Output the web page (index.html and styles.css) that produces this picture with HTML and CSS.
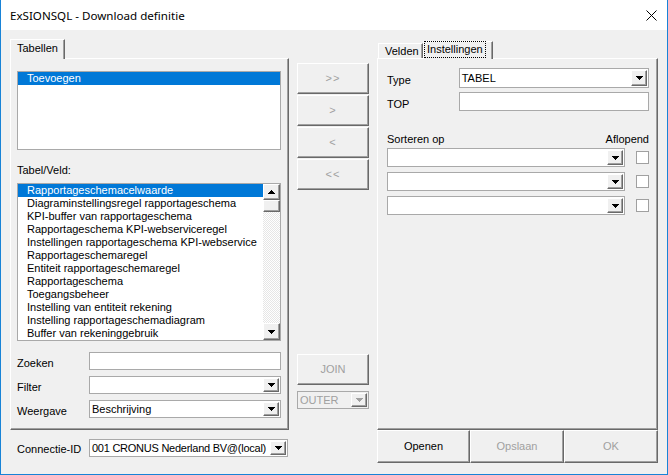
FILE: index.html
```html
<!DOCTYPE html>
<html lang="nl">

<head>
    <meta charset="UTF-8">
    <title>ExSIONSQL - Download definitie</title>
    <link rel="stylesheet" href="styles.css">
</head>

<body>
    <div class="window">
        <div class="titlebar">
            <span class="title">ExSIONSQL - Download definitie</span>
            <svg class="close" width="11" height="11" viewBox="0 0 11 11">
                <path d="M0.5 0.5L10.5 10.5M10.5 0.5L0.5 10.5" stroke="#000" stroke-width="1" fill="none" />
            </svg>
        </div>

        <div class="client">
            <!-- linker kolom: tabellen -->
            <div class="col-left">
                <div class="tabstrip">
                    <div class="tab tab-sel tab-tabellen">Tabellen</div>
                </div>
                <div class="pane pane-left">
                    <div class="listbox lb-tables">
                        <div class="item sel">Toevoegen</div>
                    </div>
                    <div class="lbl-tv">Tabel/Veld:</div>
                    <div class="listbox lb-fields">
                        <div class="items">
                            <div class="item sel">Rapportageschemacelwaarde</div>
                            <div class="item">Diagraminstellingsregel rapportageschema</div>
                            <div class="item">KPI-buffer van rapportageschema</div>
                            <div class="item">Rapportageschema KPI-webserviceregel</div>
                            <div class="item">Instellingen rapportageschema KPI-webservice</div>
                            <div class="item">Rapportageschemaregel</div>
                            <div class="item">Entiteit rapportageschemaregel</div>
                            <div class="item">Rapportageschema</div>
                            <div class="item">Toegangsbeheer</div>
                            <div class="item">Instelling van entiteit rekening</div>
                            <div class="item">Instelling rapportageschemadiagram</div>
                            <div class="item">Buffer van rekeninggebruik</div>
                        </div>
                        <div class="vscroll">
                            <div class="sbtn"><svg width="7" height="4" viewBox="0 0 7 4"><path d="M3 0h1v1H3zM2 1h3v1H2zM1 2h5v1H1zM0 3h7v1H0z" /></svg></div>
                            <div class="thumb"></div>
                            <div class="track"></div>
                            <div class="sbtn sbtn-down"><svg width="7" height="4" viewBox="0 0 7 4"><path d="M0 0h7v1H0zM1 1h5v1H1zM2 2h3v1H2zM3 3h1v1H3z" /></svg></div>
                        </div>
                    </div>

                    <div class="frow frow-first">
                        <label>Zoeken</label>
                        <div class="textbox field"></div>
                    </div>
                    <div class="frow">
                        <label>Filter</label>
                        <div class="combo field">
                            <div class="val"></div>
                            <div class="drop"><svg width="7" height="4" viewBox="0 0 7 4"><path d="M0 0h7v1H0zM1 1h5v1H1zM2 2h3v1H2zM3 3h1v1H3z" /></svg></div>
                        </div>
                    </div>
                    <div class="frow">
                        <label>Weergave</label>
                        <div class="combo field">
                            <div class="val">Beschrijving</div>
                            <div class="drop"><svg width="7" height="4" viewBox="0 0 7 4"><path d="M0 0h7v1H0zM1 1h5v1H1zM2 2h3v1H2zM3 3h1v1H3z" /></svg></div>
                        </div>
                    </div>
                </div>

                <div class="frow frow-conn">
                    <label>Connectie-ID</label>
                    <div class="combo conn">
                        <div class="val">001 CRONUS Nederland BV@(local)</div>
                        <div class="drop"><svg width="7" height="4" viewBox="0 0 7 4"><path d="M0 0h7v1H0zM1 1h5v1H1zM2 2h3v1H2zM3 3h1v1H3z" /></svg></div>
                    </div>
                </div>
            </div>

            <!-- midden: knoppen -->
            <div class="col-mid">
                <div class="btn3d mbtn dis">&gt;&gt;</div>
                <div class="btn3d mbtn dis">&gt;</div>
                <div class="btn3d mbtn dis">&lt;</div>
                <div class="btn3d mbtn dis">&lt;&lt;</div>
                <div class="btn3d jbtn dis">JOIN</div>
                <div class="combo outer dis">
                    <div class="val">OUTER</div>
                    <div class="drop"><svg width="7" height="4" viewBox="0 0 7 4"><path d="M0 0h7v1H0zM1 1h5v1H1zM2 2h3v1H2zM3 3h1v1H3z" /></svg></div>
                </div>
            </div>

            <!-- rechter kolom: velden / instellingen -->
            <div class="col-right">
                <div class="tabstrip tabstrip-right">
                    <div class="tab tab-velden">Velden</div>
                    <div class="tab tab-sel tab-inst"><span class="focus">Instellingen</span></div>
                </div>
                <div class="pane pane-right">
                    <div class="rrow">
                        <label>Type</label>
                        <div class="combo rfield type">
                            <div class="val">TABEL</div>
                            <div class="drop"><svg width="7" height="4" viewBox="0 0 7 4"><path d="M0 0h7v1H0zM1 1h5v1H1zM2 2h3v1H2zM3 3h1v1H3z" /></svg></div>
                        </div>
                    </div>
                    <div class="rrow rrow-top">
                        <label>TOP</label>
                        <div class="textbox rfield top"></div>
                    </div>

                    <div class="sorthead">
                        <span>Sorteren op</span>
                        <span>Aflopend</span>
                    </div>
                    <div class="sortrow">
                        <div class="combo sortcombo">
                            <div class="val"></div>
                            <div class="drop"><svg width="7" height="4" viewBox="0 0 7 4"><path d="M0 0h7v1H0zM1 1h5v1H1zM2 2h3v1H2zM3 3h1v1H3z" /></svg></div>
                        </div>
                        <div class="check"></div>
                    </div>
                    <div class="sortrow">
                        <div class="combo sortcombo">
                            <div class="val"></div>
                            <div class="drop"><svg width="7" height="4" viewBox="0 0 7 4"><path d="M0 0h7v1H0zM1 1h5v1H1zM2 2h3v1H2zM3 3h1v1H3z" /></svg></div>
                        </div>
                        <div class="check"></div>
                    </div>
                    <div class="sortrow">
                        <div class="combo sortcombo">
                            <div class="val"></div>
                            <div class="drop"><svg width="7" height="4" viewBox="0 0 7 4"><path d="M0 0h7v1H0zM1 1h5v1H1zM2 2h3v1H2zM3 3h1v1H3z" /></svg></div>
                        </div>
                        <div class="check"></div>
                    </div>
                </div>
                <div class="bbar">
                    <div class="btn3d bbtn b1">Openen</div>
                    <div class="btn3d bbtn dis">Opslaan</div>
                    <div class="btn3d bbtn dis">OK</div>
                </div>
            </div>
        </div>
    </div>
</body>

</html>
```

FILE: styles.css
```css
* {
    box-sizing: border-box;
}

body {
    margin: 0;
    font-family: "Liberation Sans", Arial, sans-serif;
    font-size: 11px;
    line-height: 13px;
    color: #000;
}

.window {
    width: 668px;
    height: 475px;
    border: 1px solid #1883d7;
    border-top: none;
    background: #f0f0f0;
}

.titlebar {
    height: 30px;
    background: #fff;
    display: flex;
    align-items: center;
    justify-content: space-between;
    padding: 0 10px 0 9px;
}

.title {
    font-family: "Noto Sans", sans-serif;
    font-size: 11.6px;
    padding-top: 1px;
}

.client {
    display: flex;
    gap: 8px;
    padding: 8px 0 0 9px;
}

/* 3d randen */
.btn3d,
.drop,
.sbtn,
.thumb {
    background: #f0f0f0;
    border: 1px solid;
    border-color: #fff #696969 #696969 #fff;
    box-shadow: inset -1px -1px #a0a0a0;
}

.dis {
    color: #a0a0a0;
}

/* tabs */
.tabstrip {
    height: 20px;
    display: flex;
    align-items: flex-end;
    position: relative;
    z-index: 1;
}

.tab {
    background: #f0f0f0;
    border: 1px solid;
    border-color: #fff #696969 transparent #fff;
    border-bottom: none;
    box-shadow: inset -1px 0 #a0a0a0;
    white-space: nowrap;
}

.tab-sel {
    margin-bottom: -1px;
}

.tab-tabellen {
    height: 20px;
    width: 55px;
    padding: 2px 0 0 6px;
}

.tab-velden {
    margin-left: 1px;
    width: 45px;
    height: 15px;
    padding: 1px 0 0 6px;
}

.tab-inst {
    width: 70px;
    height: 18px;
    padding: 0 0 0 1px;
}

.focus {
    display: inline-block;
    outline: 1px dotted #000;
    outline-offset: 0;
    padding: 1px 2px 1px 2px;
    line-height: 13px;
}

.pane {
    height: 372px;
    border: 1px solid;
    border-color: #fff #696969 #696969 #fff;
    box-shadow: inset -1px -1px #a0a0a0;
}

/* linker kolom */
.col-left {
    width: 279px;
    display: flex;
    flex-direction: column;
}

.pane-left {
    padding: 12px 0 0 6px;
}

.listbox {
    width: 264px;
    background: #fff;
    border: 1px solid #a9a9a9;
}

.lb-tables {
    height: 79px;
}

.item {
    height: 13px;
    padding-left: 9px;
    white-space: nowrap;
}

.item.sel {
    background: #0078d7;
    color: #fff;
}

.lbl-tv {
    margin: 14px 0 6px;
}

.lb-fields {
    height: 158px;
    display: flex;
}

.lb-fields .items {
    flex: 1;
    overflow: hidden;
}

.vscroll {
    width: 17px;
    display: flex;
    flex-direction: column;
}

.sbtn {
    height: 16px;
    display: flex;
    align-items: center;
    justify-content: center;
}

.sbtn-down {
    height: 17px;
}

.thumb {
    height: 12px;
}

.track {
    flex: 1;
    background: repeating-conic-gradient(#e6e6e6 0 25%, #fff 0 50%) 0 0 / 2px 2px;
}

.frow {
    display: flex;
    margin-top: 6px;
}

.frow label {
    width: 72px;
    padding-top: 5px;
}

.frow-first {
    margin-top: 11px;
}

.field {
    width: 192px;
    height: 18px;
}

.textbox {
    background: #fff;
    border: 1px solid #a9a9a9;
}

.combo {
    display: flex;
    background: #fff;
    border: 1px solid #a9a9a9;
    padding: 1px;
}

.combo .val {
    flex: 1;
    padding: 1px 0 0 1px;
    white-space: nowrap;
    overflow: hidden;
}

.drop {
    width: 16px;
    flex: none;
    display: flex;
    align-items: center;
    justify-content: center;
}

.frow-conn {
    margin-top: 9px;
    padding-left: 7px;
}

.frow-conn label {
    padding-top: 4px;
}

.conn {
    width: 199px;
    height: 18px;
}

.conn .val {
    letter-spacing: -0.25px;
}

/* midden */
.col-mid {
    width: 72px;
    display: flex;
    flex-direction: column;
    padding-top: 25px;
}

.mbtn {
    height: 31px;
    margin-bottom: 1px;
    display: flex;
    align-items: center;
    justify-content: center;
    letter-spacing: 1px;
}

.jbtn {
    height: 31px;
    margin-top: 163px;
    display: flex;
    align-items: center;
    justify-content: center;
}

.outer {
    margin-top: 6px;
    height: 18px;
    background: #f0f0f0;
}

.outer .drop svg {
    fill: #a0a0a0;
}

/* rechter kolom */
.col-right {
    width: 281px;
    display: flex;
    flex-direction: column;
}

.pane-right {
    padding: 9px 8px 0 9px;
}

.rrow {
    display: flex;
}

.rrow label {
    width: 72px;
    padding-top: 6px;
}

.rrow-top {
    margin-top: 4px;
}

.rfield {
    width: 191px;
}

.type {
    height: 20px;
}

.type .val {
    padding-top: 2px;
}

.top {
    height: 19px;
}

.sorthead {
    display: flex;
    justify-content: space-between;
    margin: 22px 0 2px;
}

.sortrow {
    display: flex;
    margin-bottom: 5px;
}

.sortcombo {
    width: 238px;
    height: 19px;
}

.check {
    width: 13px;
    height: 13px;
    margin: 3px 0 0 11px;
    background: #fff;
    border: 1px solid #a0a0a0;
}

.bbar {
    display: flex;
}

.bbtn {
    width: 94px;
    height: 33px;
    display: flex;
    align-items: center;
    justify-content: center;
}

.b1 {
    width: 93px;
}
```
